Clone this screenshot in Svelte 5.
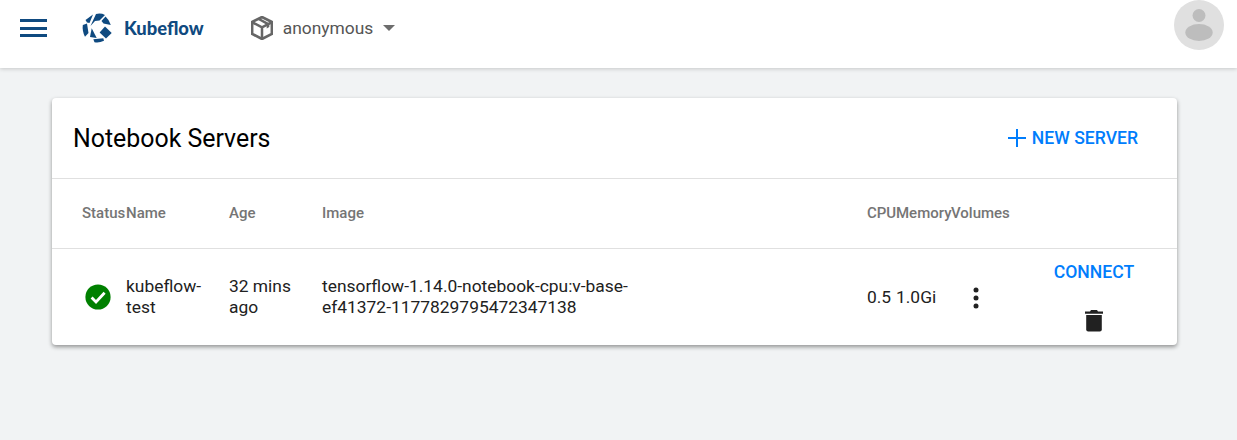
<script>
  const rows = [
    {
      name: 'kubeflow-test',
      age: '32 mins ago',
      image: 'tensorflow-1.14.0-notebook-cpu:v-base-ef41372-1177829795472347138',
      cpu: '0.5',
      memory: '1.0Gi'
    }
  ];
</script>

<div class="page">
  <header class="toolbar">
    <button class="menu" aria-label="menu">
      <span></span><span></span><span></span>
    </button>
    <div class="brand">
      <svg class="logo" viewBox="0 0 30 30" width="30" height="30">
        <path d="M3.5 7 L11 1.5 L7.5 10 L5 9.6 Z" />
        <path d="M8.5 13 L14 1 Q19 -0.2 23 2 L17.5 7.5 L13 8 Z" />
        <path d="M23.5 3.5 Q27.5 7 28.8 12 L21.5 10.5 L19.5 8 Z" />
        <path d="M0.8 12 L5 10.5 L6.5 20 L3 23.8 Q0 18 0.8 12 Z" />
        <path d="M9.7 15.3 L14.7 25 L8 24 Z" />
        <path d="M23 13.5 L29.7 20 L24 25.6 L17.6 19.6 Z" />
        <path d="M11.3 26.3 L21.3 25.3 L22 27.8 Q17 30.3 12.5 29.3 Z" />
      </svg>
      <span class="brand-name">Kubeflow</span>
    </div>
    <div class="namespace">
      <svg class="box" viewBox="1.5 0.5 21 23" width="22" height="24">
        <path d="M12 1.5 L21.5 6.2 V17.6 L12 22.5 L2.5 17.6 V6.2 Z" fill="none" stroke="#666" stroke-width="2.6" stroke-linejoin="round" />
        <path d="M2.8 6.6 L12 11.4 L21.2 6.6 M12 11.4 V22" fill="none" stroke="#666" stroke-width="2.4" />
        <path d="M7.5 3.8 L16.5 8.8 V12.5 L19 11 V7.4 L10 2.6 Z" fill="#666" />
      </svg>
      <span class="ns-name">anonymous</span>
      <span class="caret"></span>
    </div>
    <div class="avatar">
      <svg viewBox="0 0 50 50" width="50" height="50">
        <circle cx="25" cy="15.5" r="6.5" fill="#bdbdbd" />
        <ellipse cx="25" cy="32.5" rx="13.7" ry="8.5" fill="#bdbdbd" />
      </svg>
    </div>
  </header>

  <main class="card">
    <div class="card-head">
      <h1>Notebook Servers</h1>
      <button class="new-server">
        <svg viewBox="0 0 18 18" width="18" height="18">
          <path d="M9 0 V18 M0 9 H18" stroke="#007dfc" stroke-width="2" />
        </svg>
        NEW SERVER
      </button>
    </div>

    <table>
      <thead>
        <tr>
          <th class="c-status">Status</th>
          <th class="c-name">Name</th>
          <th class="c-age">Age</th>
          <th class="c-image">Image</th>
          <th class="c-cpu">CPU</th>
          <th class="c-memory">Memory</th>
          <th class="c-volumes">Volumes</th>
          <th class="c-actions"></th>
        </tr>
      </thead>
      <tbody>
        {#each rows as row}
          <tr>
            <td class="c-status">
              <svg class="check" viewBox="0 0 26 26" width="26" height="26">
                <circle cx="13" cy="13" r="12.6" fill="#008000" />
                <path d="M6.6 13.6 L11 18 L19.6 8.8" fill="none" stroke="#fff" stroke-width="2.8" />
              </svg>
            </td>
            <td class="c-name">{row.name}</td>
            <td class="c-age">{row.age}</td>
            <td class="c-image"><div class="image-text">{row.image}</div></td>
            <td class="c-cpu">{row.cpu}</td>
            <td class="c-memory">{row.memory}</td>
            <td class="c-volumes">
              <svg class="dots" viewBox="0 0 6 22" width="6" height="22">
                <circle cx="3" cy="3" r="2.5" /><circle cx="3" cy="11" r="2.5" /><circle cx="3" cy="19" r="2.5" />
              </svg>
            </td>
            <td class="c-actions">
              <div class="actions">
                <button class="connect">CONNECT</button>
                <svg class="trash" viewBox="0 0 18 22" width="18" height="23">
                  <path d="M6 0.5 H12 L13 2 H18 V4.2 H0 V2 H5 Z" />
                  <path d="M1.2 5.5 H16.8 V20 Q16.8 22 14.8 22 H3.2 Q1.2 22 1.2 20 Z" />
                </svg>
              </div>
            </td>
          </tr>
        {/each}
      </tbody>
    </table>
  </main>
</div>

<style>
  :global(body) {
    margin: 0;
    background: #f1f3f4;
    font-family: Roboto, "Liberation Sans", sans-serif;
  }

  .page {
    height: 440px;
    overflow: hidden;
  }

  .toolbar {
    display: flex;
    align-items: flex-start;
    height: 68px;
    background: #fff;
    box-shadow: 0 1px 4px rgba(0, 0, 0, 0.18);
  }

  button {
    border: 0;
    padding: 0;
    background: none;
    font-family: inherit;
  }

  .menu {
    display: flex;
    flex-direction: column;
    gap: 4.5px;
    width: 27px;
    margin: 19px 0 0 20px;
  }

  .menu span {
    display: block;
    height: 3px;
    background: #0f4a80;
  }

  .brand {
    display: flex;
    align-items: center;
    gap: 12px;
    margin: 13px 0 0 35px;
  }

  .logo {
    display: block;
    fill: #0f4a80;
  }

  .brand-name {
    font-family: Lato, Roboto, sans-serif;
    font-size: 18.4px;
    font-weight: 900;
    color: #0f4a80;
  }

  .namespace {
    display: flex;
    align-items: center;
    margin: 16px 0 0 47px;
  }

  .box {
    display: block;
  }

  .ns-name {
    margin-left: 10px;
    font-size: 17.4px;
    color: #555;
  }

  .caret {
    width: 0;
    height: 0;
    margin-left: 10px;
    border-left: 6px solid transparent;
    border-right: 6px solid transparent;
    border-top: 6px solid #6d6d6d;
  }

  .avatar {
    width: 50px;
    height: 50px;
    margin-left: auto;
    margin-right: 13px;
    border-radius: 50%;
    background: #e0e0e0;
  }

  .avatar svg {
    display: block;
  }

  .card {
    width: 1125px;
    height: 247px;
    margin: 30px 0 0 52px;
    background: #fff;
    border-radius: 4px;
    box-shadow: 0 2px 4px rgba(0, 0, 0, 0.4);
  }

  .card-head {
    display: flex;
    align-items: center;
    justify-content: space-between;
    height: 80px;
    padding: 0 39px 0 21px;
    border-bottom: 1px solid #e0e0e0;
  }

  h1 {
    margin: 0;
    font-size: 24.9px;
    font-weight: 400;
    color: #000;
  }

  .new-server {
    display: flex;
    align-items: center;
    gap: 6px;
    font-size: 17.6px;
    font-weight: 500;
    color: #007dfc;
  }

  .new-server svg {
    display: block;
  }

  table {
    width: 100%;
    border-collapse: collapse;
    table-layout: fixed;
  }

  th {
    height: 67px;
    padding: 0 0 2px;
    text-align: left;
    font-size: 15px;
    font-weight: 500;
    color: #757575;
    border-bottom: 1px solid #e0e0e0;
    white-space: nowrap;
  }

  td {
    height: 96px;
    padding: 0;
    font-size: 17.4px;
    line-height: 21px;
    color: #212121;
  }

  .c-status { width: 44px; padding-left: 30px; }
  .c-name { width: 103px; }
  .c-age { width: 93px; }
  .c-image { width: 545px; }
  .c-cpu { width: 29px; }
  .c-memory { width: 55px; }
  .c-volumes { width: 60px; }
  .c-actions { width: auto; }

  td.c-status {
    padding-left: 33px;
  }

  td.c-name,
  td.c-age {
    padding-right: 20px;
  }

  .image-text {
    width: 340px;
    overflow-wrap: anywhere;
  }

  .check,
  .dots {
    display: block;
  }

  .dots {
    fill: #212121;
    margin: 2px 0 0 22px;
  }

  .actions {
    display: flex;
    flex-direction: column;
    align-items: center;
    gap: 27px;
    width: 82px;
    margin-left: 42px;
  }

  .connect {
    font-size: 17.6px;
    font-weight: 500;
    color: #007dfc;
  }

  .trash {
    display: block;
    fill: #212121;
  }
</style>
